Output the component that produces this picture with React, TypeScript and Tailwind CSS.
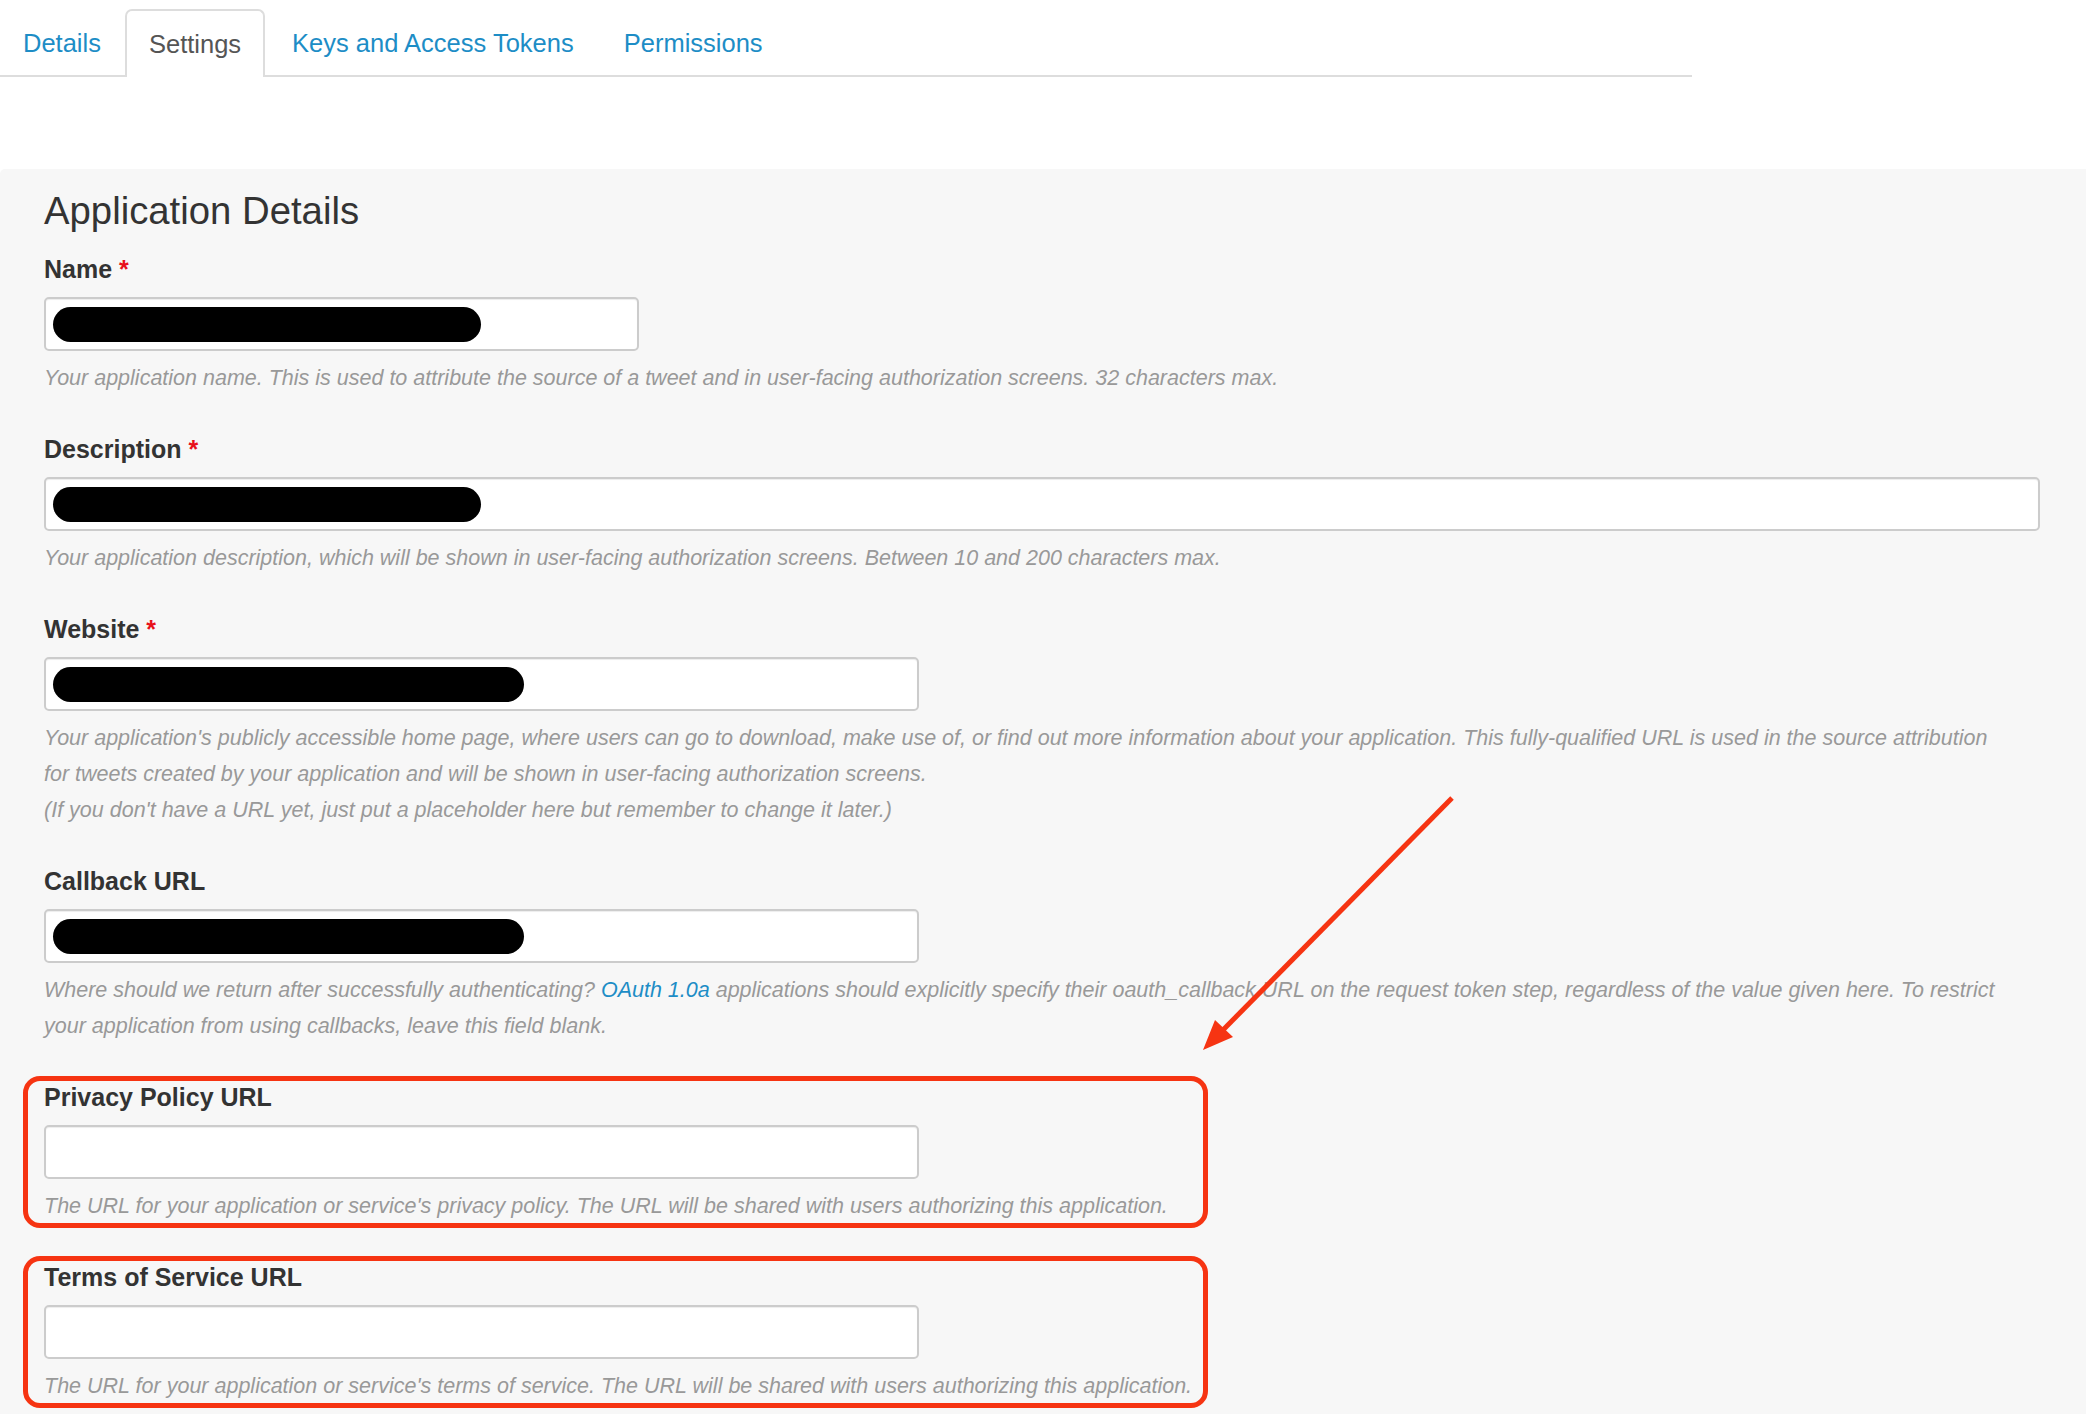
import React from "react";

const Pill = ({ w }: { w: number }) => (
  <div className="h-[35px] rounded-full bg-black" style={{ width: w }} />
);

function Field({
  label,
  required,
  inputW,
  pill,
  children,
  boxed,
}: {
  label: string;
  required?: boolean;
  inputW: string;
  pill?: number;
  children: React.ReactNode;
  boxed?: boolean;
}) {
  return (
    <div className="relative flex flex-col">
      {boxed && (
        <div className="pointer-events-none absolute left-[-21px] top-[-6px] h-[152px] w-[1185px] rounded-[17px] border-[5px] border-[#f63412]" />
      )}
      <div className="h-[30px] text-[25px] font-bold leading-[30px] text-[#333]">
        {label}
        {required && <span className="text-[#e8101b]"> *</span>}
      </div>
      <div
        className={`mt-[13px] flex h-[54px] items-center rounded-[5px] border-2 border-[#cccccc] bg-white pl-[7px] shadow-[inset_0_1px_1px_rgba(0,0,0,0.075)] ${inputW}`}
      >
        {pill ? <Pill w={pill} /> : null}
      </div>
      <div className="mt-[9px] text-[21.5px] italic leading-[36px] text-[#999]">{children}</div>
    </div>
  );
}

export default function App() {
  return (
    <div
      className="relative h-[1414px] w-[2086px] overflow-hidden bg-white"
      style={{ fontFamily: '"Liberation Sans", Arial, sans-serif' }}
    >
      {/* Tabs */}
      <div className="flex h-[77px] w-[1692px] items-end border-b-2 border-[#dddddd]">
        <div className="mr-[3px] flex h-[66px] items-center pl-[23px] pr-[21px] pt-[2px] text-[25.5px] text-[#1d8dc6]">Details</div>
        <div className="mb-[-2px] mr-[3px] flex h-[68px] items-center rounded-t-[7px] border-2 border-b-0 border-[#dddddd] bg-white px-[22px] text-[25.5px] text-[#555]">
          Settings
        </div>
        <div className="mr-[3px] flex h-[66px] items-center pl-[24px] pr-[24px] pt-[2px] text-[25.5px] text-[#1d8dc6]">
          Keys and Access Tokens
        </div>
        <div className="flex h-[66px] items-center px-[23px] pt-[2px] text-[25.5px] text-[#1d8dc6]">Permissions</div>
      </div>

      {/* Panel */}
      <div className="mt-[92px] flex min-h-[1300px] flex-col rounded-tl-[5px] bg-[#f7f7f7] pl-[44px] pr-[46px] pt-[20px]">
        <h2 className="h-[44px] text-[38.3px] font-normal leading-[44px] text-[#333]">Application Details</h2>
        <div className="mt-[21px] flex flex-col gap-[38px]">
          <Field label="Name" required inputW="w-[595px]" pill={428}>
            Your application name. This is used to attribute the source of a tweet and in user-facing authorization
            screens. 32 characters max.
          </Field>
          <Field label="Description" required inputW="w-full" pill={428}>
            Your application description, which will be shown in user-facing authorization screens. Between 10 and 200
            characters max.
          </Field>
          <Field label="Website" required inputW="w-[875px]" pill={471}>
            <div className="whitespace-nowrap">
              Your application's publicly accessible home page, where users can go to download, make use of, or find out
              more information about your application. This fully-qualified URL is used in the source attribution
            </div>
            <div className="whitespace-nowrap">
              for tweets created by your application and will be shown in user-facing authorization screens.
            </div>
            <div className="whitespace-nowrap">
              (If you don't have a URL yet, just put a placeholder here but remember to change it later.)
            </div>
          </Field>
          <Field label="Callback URL" inputW="w-[875px]" pill={471}>
            <div className="whitespace-nowrap">
              Where should we return after successfully authenticating?{" "}
              <span className="text-[#1d8dc6]">OAuth 1.0a</span> applications should explicitly specify their
              oauth_callback URL on the request token step, regardless of the value given here. To restrict
            </div>
            <div className="whitespace-nowrap">your application from using callbacks, leave this field blank.</div>
          </Field>
          <Field label="Privacy Policy URL" inputW="w-[875px]" boxed>
            The URL for your application or service's privacy policy. The URL will be shared with users authorizing this
            application.
          </Field>
          <Field label="Terms of Service URL" inputW="w-[875px]" boxed>
            The URL for your application or service's terms of service. The URL will be shared with users authorizing
            this application.
          </Field>
        </div>
      </div>

      {/* Annotation arrow */}
      <svg className="pointer-events-none absolute left-0 top-0" width="2086" height="1414">
        <line x1="1452" y1="798" x2="1222" y2="1031" stroke="#f63412" strokeWidth="5" />
        <polygon points="1203,1050 1233,1037 1215,1020" fill="#f63412" />
      </svg>
    </div>
  );
}
